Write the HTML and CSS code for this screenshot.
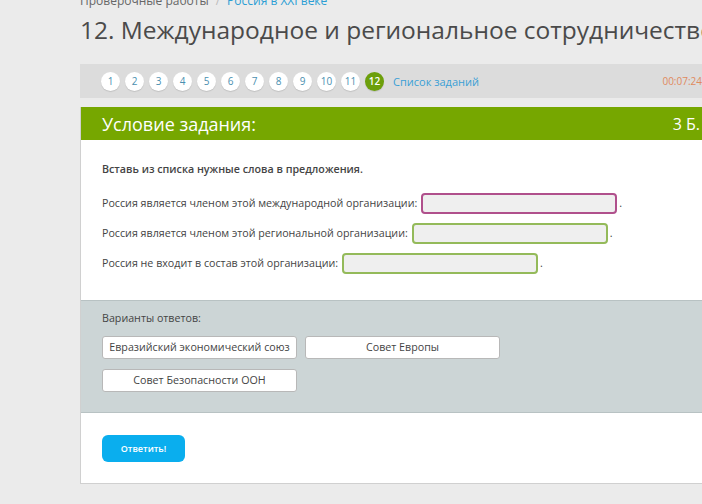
FILE: index.html
```html
<!DOCTYPE html>
<html lang="ru">
<head>
<meta charset="utf-8">
<link rel="stylesheet" href="styles.css">
</head>
<body>
<div class="page">
  <div class="crumbs"><span class="crumb">Проверочные работы</span><span class="sep">/</span><span class="crumb link">Россия в XXI веке</span></div>
  <h1 class="title">12. Международное и региональное сотрудничество</h1>
  <div class="nav">
    <div class="steps">
      <span class="step">1</span><span class="step">2</span><span class="step">3</span><span class="step">4</span><span class="step">5</span><span class="step">6</span><span class="step">7</span><span class="step">8</span><span class="step">9</span><span class="step">10</span><span class="step">11</span><span class="step current">12</span>
      <span class="list-link">Список заданий</span>
    </div>
    <span class="timer">00:07:24</span>
  </div>
  <div class="card">
    <div class="card-head"><span>Условие задания:</span><span class="points">3 Б.</span></div>
    <div class="card-body">
      <p class="lead">Вставь из списка нужные слова в предложения.</p>
      <div class="line">Россия является членом этой международной организации: <span class="slot purple"></span>.</div>
      <div class="line">Россия является членом этой региональной организации: <span class="slot"></span>.</div>
      <div class="line">Россия не входит в состав этой организации: <span class="slot"></span>.</div>
    </div>
    <div class="answers">
      <div class="answers-label">Варианты ответов:</div>
      <div class="chips">
        <span class="chip">Евразийский экономический союз</span>
        <span class="chip">Совет Европы</span>
        <span class="chip">Совет Безопасности ООН</span>
      </div>
    </div>
    <div class="card-foot">
      <button class="submit">Ответить!</button>
    </div>
  </div>
</div>
</body>
</html>
```
FILE: styles.css
```css
html, body {
  margin: 0;
  padding: 0;
  overflow: hidden;
  background: #ebebeb;
  font-family: "Open Sans", "DejaVu Sans", sans-serif;
  color: #333;
}
.page {
  margin-left: 80px;
  width: 660px;
}
.crumbs {
  font-size: 12px;
  line-height: 16px;
  margin-top: -7px;
  color: #666;
}
.sep {
  color: #bbb;
  margin: 0 7px;
}
.link { color: #2c9ed4; }
.title {
  margin: 0;
  font-weight: 400;
  font-size: 24.5px;
  line-height: 34px;
  color: #4a4a4a;
  white-space: nowrap;
  margin-top: 4px;
}
.nav {
  margin-top: 17px;
  height: 34px;
  background: #dcdcdc;
  display: flex;
  align-items: center;
  justify-content: space-between;
  padding: 0 38px 0 21px;
}
.steps {
  display: flex;
  align-items: center;
  gap: 5px;
}
.step {
  width: 19px;
  height: 19px;
  border-radius: 50%;
  background: #fff;
  box-shadow: 0 1px 1px rgba(0,0,0,0.12);
  font-size: 10px;
  line-height: 19px;
  text-align: center;
  color: #4a8fb0;
}
.step.current {
  background: #6c9f0b;
  color: #fff;
  font-weight: 600;
}
.list-link {
  color: #3a9fd6;
  font-size: 11px;
  margin-left: 4px;
}
.timer {
  color: #e08a5e;
  font-size: 10px;
}
.card {
  margin-top: 9px;
  border-left: 1px solid #d0d0d0;
  background: #fff;
  border-bottom: 1px solid #d0d0d0;
}
.card-head {
  height: 33px;
  background: #76a700;
  color: #fff;
  font-size: 18px;
  display: flex;
  align-items: center;
  justify-content: space-between;
  padding: 0 40px 0 21px;
}
.points { font-size: 16px; }
.card-body {
  padding: 20px 21px 22px;
  font-size: 10.7px;
}
.lead {
  margin: 0 0 10px;
  font-weight: 600;
  color: #444;
  line-height: 18px;
}
.line {
  display: flex;
  align-items: center;
  height: 30px;
  color: #444;
  white-space: nowrap;
}
.slot {
  display: inline-block;
  width: 192px;
  height: 17px;
  border: 2px solid #94ba5a;
  border-radius: 4px;
  background: #efefef;
  margin: 0 2px 0 4px;
}
.slot.purple { border-color: #b0508c; }
.answers {
  background: #ccd5d6;
  border-top: 1px solid #b8c2c3;
  border-bottom: 1px solid #b8c2c3;
  padding: 10px 21px 20px;
  font-size: 10.7px;
}
.answers-label {
  color: #444;
  line-height: 14px;
  margin-bottom: 11px;
}
.chips {
  display: grid;
  grid-template-columns: 195px 195px;
  gap: 10px 8px;
}
.chip {
  height: 21px;
  background: #fff;
  border: 1px solid #b8b8b8;
  border-radius: 3px;
  text-align: center;
  line-height: 21px;
  color: #444;
  white-space: nowrap;
}
.card-foot {
  padding: 22px 21px 21px;
}
.submit {
  width: 83px;
  height: 27px;
  border: none;
  border-radius: 6px;
  background: #0aaeee;
  color: #fff;
  font-family: "Open Sans", sans-serif;
  font-size: 9px;
  font-weight: 600;
}
```
